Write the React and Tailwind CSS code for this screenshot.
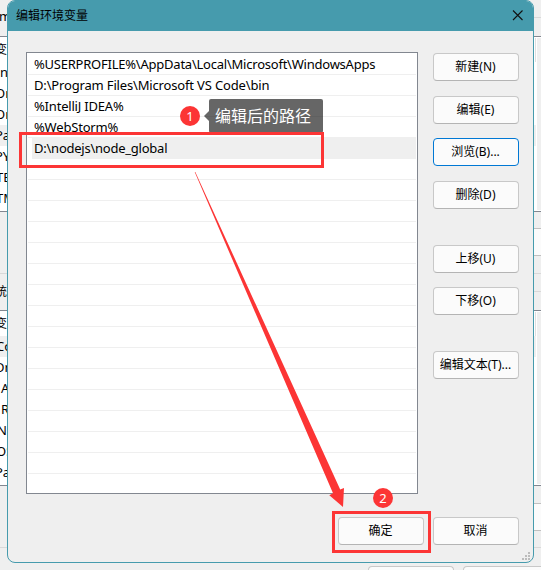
import React from "react";

const paths = [
  { text: "%USERPROFILE%\\AppData\\Local\\Microsoft\\WindowsApps", track: "tracking-[-0.23px]" },
  { text: "D:\\Program Files\\Microsoft VS Code\\bin", track: "tracking-[-0.16px]" },
  { text: "%IntelliJ IDEA%", track: "tracking-[-0.2px]" },
  { text: "%WebStorm%", track: "tracking-[-0.19px]" },
  { text: "D:\\nodejs\\node_global", track: "tracking-[-0.24px]", selected: true },
];
const rows = [...paths, ...Array.from({ length: 15 }, () => ({ text: "" }))];

function Button({ children, className = "", focused = false }) {
  return (
    <div
      className={`flex h-7 w-[86px] shrink-0 items-center justify-center whitespace-nowrap rounded-[4px] border bg-[#fbfbfb] pr-px text-[12px] leading-none ${
        focused ? "border-[#0078d4]" : "border-[#c8c8c8] border-b-[#b4b4b4]"
      } ${className}`}
    >
      {children}
    </div>
  );
}

function LeftList({ items, height }) {
  return (
    <div className={`flex shrink-0 flex-col border-y border-[#828790] bg-white ${height}`}>
      {items.map(([label, grey, shift], i) => (
        <div
          key={i}
          className={`flex shrink-0 items-center whitespace-nowrap ${i === 0 ? "h-[25px] text-[12px]" : "h-[21px]"} ${grey ? "bg-[#efefef]" : ""}`}
        >
          <span className={shift}>{label}</span>
        </div>
      ))}
    </div>
  );
}

function RightList({ selectedFirst }) {
  return (
    <div className="flex h-[176px] shrink-0 border-y border-[#828790] bg-white">
      <div className="flex w-[3px] flex-col">
        <div className="mt-px h-6 w-0.5 border-r border-[#dfdfdf]" />
        <div className={`h-[21px] w-0.5 bg-[#efefef] ${selectedFirst ? "" : "mt-[63px]"}`} />
      </div>
      <div className="mb-px mt-px flex-1 bg-[#efefef]" />
    </div>
  );
}

function Background() {
  return (
    <div className="flex h-full justify-between">
      <div className="flex w-3 flex-col overflow-hidden text-[13px] leading-none">
        <div className="flex h-9 shrink-0 items-center pb-[3px]">
          <span className="-ml-px">m</span>
        </div>
        <LeftList
          height="h-[176px]"
          items={[
            ["变", false, "-ml-[5px]"],
            ["n", false, ""],
            ["Or", false, "-ml-[5px]"],
            ["Or", false, "-ml-[5px]"],
            ["Pa", true, "-ml-[5px]"],
            ["PY", false, "-ml-[5px]"],
            ["TE", false, "-ml-[4px]"],
            ["TM", false, "-ml-[4px]"],
          ]}
        />
        <div className="h-[62px] shrink-0 border-b border-[#d9d9d9]" />
        <div className="flex h-9 shrink-0 items-center text-[12px]">
          <span className="-ml-[5px]">统</span>
        </div>
        <LeftList
          height="h-[176px]"
          items={[
            ["变", false, "-ml-[5px]"],
            ["Co", true, "-ml-[4px]"],
            ["Dr", false, "-ml-[5px]"],
            ["A", false, "ml-px"],
            ["R", false, "ml-px"],
            ["N", false, "-ml-[3px]"],
            ["OS", false, "-ml-[4px]"],
            ["Pa", false, "-ml-[5px]"],
          ]}
        />
        <div className="h-[62px] shrink-0 border-b border-[#d9d9d9]" />
      </div>
      <div className="flex flex-1 items-end gap-[9px] overflow-hidden pl-[356px]">
        <Button className="-mb-6">{""}</Button>
        <Button className="-mb-6">{""}</Button>
      </div>
      <div className="-ml-3 flex w-[7px] shrink-0 flex-col">
        <div className="h-[18px] shrink-0 border-b border-[#d9d9d9]" />
        <div className="h-[18px] shrink-0" />
        <RightList />
        <div className="mt-4 h-7 shrink-0 border-y border-[#c0c0c0] bg-[#fbfbfb]" />
        <div className="h-[18px] shrink-0 border-b border-[#d9d9d9]" />
        <div className="h-[18px] shrink-0 border-b border-[#d9d9d9]" />
        <div className="h-[18px] shrink-0" />
        <RightList selectedFirst />
        <div className="mt-[17px] h-7 shrink-0 border-y border-[#c0c0c0] bg-[#fbfbfb]" />
        <div className="h-[17px] shrink-0 border-b border-[#d9d9d9]" />
      </div>
    </div>
  );
}

function Dialog() {
  return (
    <div className="absolute left-[7px] top-0 flex h-[563px] w-[527px] flex-col overflow-hidden rounded-[8px] border border-[#469bad] bg-[#efefef]">
      <div className="flex h-[30px] shrink-0 items-center justify-between bg-[#469bad] pl-2 pr-[9px]">
        <span className="text-[12px] leading-none">编辑环境变量</span>
        <svg width="12" height="12" viewBox="0 0 12 12" className="-translate-y-px" stroke="#111" strokeWidth="1.1" fill="none">
          <path d="M1 1.5 10.5 11M10.5 1.5 1 11" />
        </svg>
      </div>
      <div className="flex pl-[18px] pt-[21px]">
        <div className="flex h-[442px] w-[392px] flex-col border border-[#828790] bg-white px-px pt-px">
          {rows.map((row, i) => (
            <div
              key={i}
              className={`flex h-[21px] shrink-0 items-center border-b border-[#efefef] text-[13px] leading-none ${
                row.selected ? "ml-1 bg-[#efefef] pl-[2px]" : "pl-[6px]"
              }`}
            >
              <span className={`whitespace-pre ${row.track || ""}`}>{row.text}</span>
            </div>
          ))}
        </div>
        <div className="ml-[15px] flex flex-col pt-px">
          <Button>新建(N)</Button>
          <Button className="mt-[15px]">编辑(E)</Button>
          <Button className="mt-[14px]" focused>浏览(B)...</Button>
          <Button className="mt-[15px]">删除(D)</Button>
          <Button className="mt-9">上移(U)</Button>
          <Button className="mt-[14px]">下移(O)</Button>
          <Button className="mt-9">编辑文本(T)...</Button>
        </div>
      </div>
      <div className="flex justify-end gap-[9px] pr-[14px] pt-[23px]">
        <Button>确定</Button>
        <Button>取消</Button>
      </div>
      <svg className="ml-auto mr-[3px] mt-[7px] shrink-0" width="8" height="8" fill="#bcbcbc">
        <path d="M6 0h2v2H6zM3 3h2v2H3zM6 3h2v2H6zM0 6h2v2H0zM3 6h2v2H3zM6 6h2v2H6z" />
      </svg>
    </div>
  );
}

function Badge({ n, className }) {
  return (
    <div className={`absolute flex size-5 items-center justify-center rounded-full bg-[#fc3535] text-[13px] leading-none text-white ${className}`}>
      {n}
    </div>
  );
}

function Annotations() {
  return (
    <>
      <div className="absolute left-[204px] top-[99px] flex items-center">
        <svg width="5" height="10" viewBox="0 0 5 10" fill="#000" fillOpacity="0.6">
          <path d="M5 0v10L0 5z" />
        </svg>
        <div className="flex h-[34px] w-[114px] items-center rounded-[2px] bg-black/60 pl-[6px] text-[16px] leading-none text-white">
          编辑后的路径
        </div>
      </div>
      <Badge n="1" className="left-[180px] top-[106px]" />
      <div className="absolute left-[19px] top-[132px] h-9 w-[305px] border-[3px] border-[#fc3535]" />
      <svg className="absolute left-0 top-0" width="541" height="570" fill="#fc3535">
        <path d="M194.7 172 195.3 172 340.2 489.5 344 488 343 507 329.3 495.3 333 493.3Z" />
      </svg>
      <div className="absolute left-[332px] top-[511px] h-[42px] w-[99px] border-[3px] border-[#fc3535]" />
      <Badge n="2" className="left-[373px] top-[488px]" />
    </>
  );
}

export default function App() {
  return (
    <div className="relative h-[570px] w-[541px] overflow-hidden bg-[#efefef] font-['Noto_Sans','Noto_Sans_CJK_SC',sans-serif] text-black">
      <Background />
      <Dialog />
      <Annotations />
    </div>
  );
}
